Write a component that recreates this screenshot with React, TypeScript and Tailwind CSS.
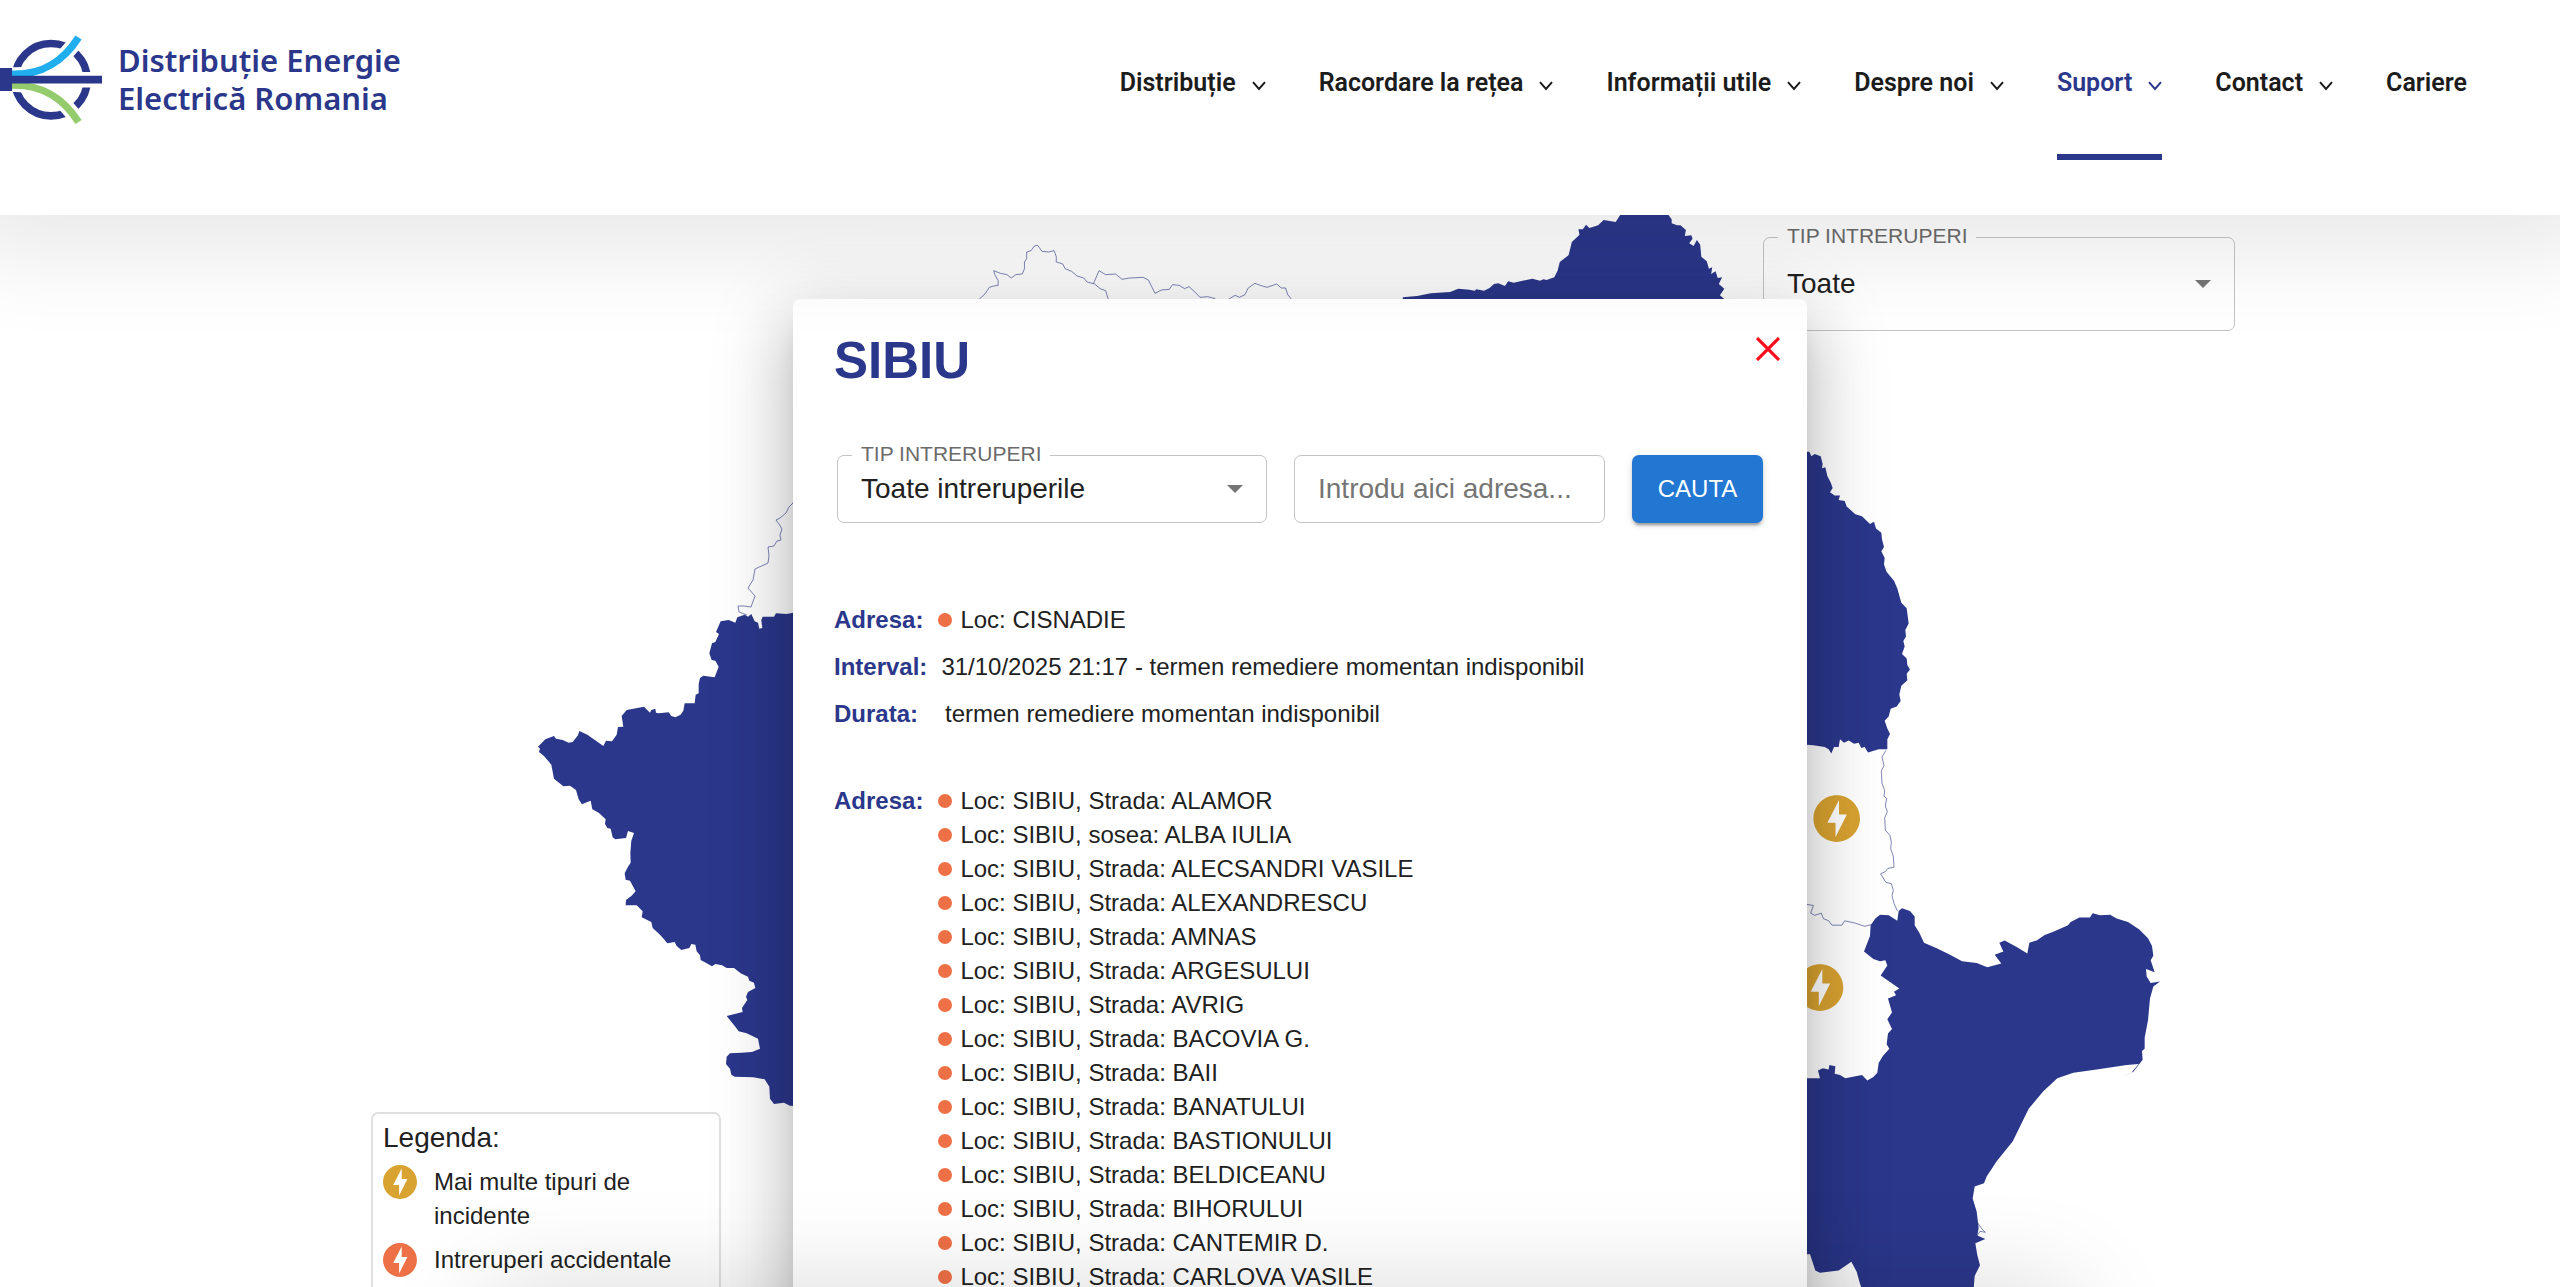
import React, { useState } from 'react';
import clsx from 'clsx';

const NAV_ITEMS = [
  { label: 'Distribuție', hasMenu: true },
  { label: 'Racordare la rețea', hasMenu: true },
  { label: 'Informații utile', hasMenu: true },
  { label: 'Despre noi', hasMenu: true },
  { label: 'Suport', hasMenu: true, active: true },
  { label: 'Contact', hasMenu: true },
  { label: 'Cariere', hasMenu: false },
];

const STREETS = [
  'Strada: ALAMOR',
  'sosea: ALBA IULIA',
  'Strada: ALECSANDRI VASILE',
  'Strada: ALEXANDRESCU',
  'Strada: AMNAS',
  'Strada: ARGESULUI',
  'Strada: AVRIG',
  'Strada: BACOVIA G.',
  'Strada: BAII',
  'Strada: BANATULUI',
  'Strada: BASTIONULUI',
  'Strada: BELDICEANU',
  'Strada: BIHORULUI',
  'Strada: CANTEMIR D.',
  'Strada: CARLOVA VASILE',
];

const BOLT =
  'M12 2.02c-5.51 0-9.98 4.47-9.98 9.98s4.47 9.98 9.98 9.98 9.98-4.47 9.98-9.98S17.51 2.02 12 2.02zM11.48 20v-6.26H8L13 4v6.26h3.35L11.48 20z';

const Logo: React.FC = () => (
  <a href="#" className="flex items-center">
    <svg viewBox="0 30 110 100" className="h-[100px] w-[110px]" aria-hidden="true">
      <circle cx="51" cy="79.7" r="36.2" fill="none" stroke="#2b378b" strokeWidth="7.6" />
      <path d="M12 74.8C44 76 64 60 78.5 37.5" fill="none" stroke="#fff" strokeWidth="15" />
      <path d="M12 84.6C44 83.4 64 99.4 78.5 121.9" fill="none" stroke="#fff" strokeWidth="15" />
      <path d="M12 72h92v15.4H12z" fill="#fff" />
      <path d="M12 74.3C44 75 64 60 78.5 37.5" fill="none" stroke="#20aeee" strokeWidth="7.4" />
      <path d="M12 85.1C44 84.4 64 99.4 78.5 121.9" fill="none" stroke="#93cb6d" strokeWidth="7.4" />
      <path d="M0 68h12v7.7h90v7.7H12V91H0z" fill="#2b378b" />
    </svg>
    <span className="pb-[3px] pl-[8px] font-['Noto_Sans',sans-serif] text-[31px] leading-[38px] font-semibold text-[#2b378b]">
      Distribuție Energie
      <br />
      Electrică Romania
    </span>
  </a>
);

const Header: React.FC = () => (
  <header className="relative z-20 flex h-[215px] shrink-0 items-start justify-between bg-white pr-[93px] shadow-[0_2px_84px_40px_rgba(0,0,0,0.088)]">
    <div className="pt-[30px]">
      <Logo />
    </div>
    <nav className="flex gap-[53px]">
      {NAV_ITEMS.map((item) => (
        <a
          key={item.label}
          href="#"
          className={clsx(
            "flex h-[160px] items-center gap-[16px] border-b-6 pt-[11px] font-['Roboto',sans-serif] text-[25px] font-semibold",
            item.active ? 'border-[#2b378b] text-[#2b378b]' : 'border-transparent text-[#1c1c1c]',
          )}
        >
          {item.label}
          {item.hasMenu && (
            <svg viewBox="0 0 14 10" className="mt-[6px] h-[10px] w-[14px]" fill="none" stroke="currentColor" strokeWidth="2">
              <path d="M1 1.2 7 8l6-6.8" />
            </svg>
          )}
        </a>
      ))}
    </nav>
  </header>
);

interface OutlinedSelectProps {
  id: string;
  value: string;
  className?: string;
  selectClassName: string;
}

const OutlinedSelect: React.FC<OutlinedSelectProps> = ({ id, value, className, selectClassName }) => (
  <fieldset className={clsx('rounded-[7px] border border-[#c4c4c4]', className)}>
    <legend className="ml-[14px] px-[9px] pb-[2px] text-[21px] leading-[18px] text-[#6b6b6b]">
      <label htmlFor={id}>TIP INTRERUPERI</label>
    </legend>
    <div className="relative">
      <select
        id={id}
        defaultValue={value}
        className={clsx('block w-full appearance-none bg-transparent pl-[23px] text-[28px] text-[#212121] outline-none', selectClassName)}
      >
        <option>{value}</option>
      </select>
      <svg viewBox="0 0 16 8" className="pointer-events-none absolute inset-y-0 right-[23px] my-auto h-[8px] w-[16px]" aria-hidden="true">
        <path d="M0 0h16L8 8z" fill="#757575" />
      </svg>
    </div>
  </fieldset>
);

const CountyMap: React.FC = () => (
  <svg viewBox="0 215 2560 1072" className="absolute inset-x-0 top-0 w-full" aria-hidden="true">
    {/* western counties */}
    <g transform="translate(520 600) scale(.33333)" fill="#2b378b">
      <path d="M900 40 820 38 800 42 768 40 762 50 728 50 724 60 727 84 718 86 714 68 704 64 694 42 684 50 674 44 652 52 646 68 626 60 602 64 588 96 597 102 586 126 576 130 568 160 575 180 586 182 596 200 584 232 550 227 540 234 536 252 536 280 527 284 524 310 494 310 490 332 482 344 466 352 454 348 446 337 416 340 408 338 406 326 394 330 390 338 372 320 320 330 305 348 310 380 294 381 290 404 276 424 258 422 250 438 202 404 178 393 174 406 158 426 146 428 128 420 108 416 102 408 76 418 54 440 60 446 57 456 72 468 94 494 102 536 130 559 150 557 168 570 176 598 186 613 202 606 212 602 217 628 236 638 257 658 255 672 262 684 272 686 278 712 286 718 318 714 324 693 342 699 334 722 331 760 332 788 324 800 314 820 317 839 330 842 347 874 334 888 318 900 317 916 350 916 368 934 365 952 394 966 398 984 420 1004 432 1018 442 1030 464 1026 470 1038 484 1050 508 1044 514 1032 526 1034 530 1054 540 1066 542 1080 560 1090 576 1099 586 1092 606 1096 620 1104 642 1104 662 1120 684 1130 688 1142 702 1148 706 1164 684 1176 678 1190 682 1200 666 1224 668 1236 620 1248 646 1280 656 1294 680 1300 714 1316 720 1346 696 1356 664 1358 630 1360 620 1370 618 1392 630 1406 634 1424 644 1430 700 1432 734 1438 748 1460 750 1496 762 1512 792 1508 810 1517 900 1520Z" />
    </g>
    <path
      d="M747 615 739 612 738 606 744 606 751 607 755 596 748 588 753 580 755 569 768 563 769 556 768 547 774 546 777 541 781 540 780 535 782 529 779 524 776 520 780 518 786 513 789 507 793 503 800 490"
      fill="none"
      stroke="#2b378b"
      strokeOpacity=".6"
    />
    {/* northern border */}
    <g transform="translate(940 200) scale(.54847 .33333)">
      <path
        d="M842 310 844 292 870 288 895 280 930 276 945 266 965 269 975 272 978 268 992 272 1002 264 1010 252 1018 250 1030 258 1036 244 1046 248 1080 236 1094 242 1100 238 1106 240 1120 232 1126 212 1130 186 1146 166 1152 126 1166 104 1164 88 1172 88 1178 74 1184 84 1200 76 1210 60 1232 66 1242 40 1326 40 1334 58 1334 70 1344 76 1350 76 1360 90 1358 108 1370 106 1372 116 1366 130 1374 138 1380 120 1386 134 1388 170 1398 184 1402 206 1408 202 1406 222 1414 214 1418 234 1426 232 1420 252 1430 266 1422 286 1432 300V312Z"
        fill="#2b378b"
      />
      <g fill="none" stroke="#2b378b" strokeOpacity=".6" strokeWidth="1">
        <path vectorEffect="non-scaling-stroke" d="m70 300 12-18 8-20 8-4 8-2 0-14-6-18-2-12 12 8 12 4 8 10 8-10 12-2 4-16 0-20 4-10 0-20 8-4 6-14 6-2 8 18 12 2 10-4 4 18 0 16 12 6 4 14 12 8 10 14 12 6 6 12 14 6 10 14 10 6 6 32" />
        <path vectorEffect="non-scaling-stroke" d="m280 250 10-38 12 12 18-2 12 16 14-4 24-2 10 8 6 20 6 20 12-10 14-2 6-14 12 2 10 10 8-6 12 18 8 14 14-2 14 6" />
        <path vectorEffect="non-scaling-stroke" d="m526 298 12-12 8 6 10-8 6-20 12-14 10 6 12 6 18-10 8 12 8 0 4 20 8 16" />
      </g>
    </g>
    {/* eastern counties and the coast */}
    <g transform="translate(1780 430) scale(.33333 .54655)">
      <path
        d="M60 40 88 40 94 48 104 44 122 48 128 62 126 70 136 68 142 84 152 96 158 106 150 114 164 120 180 120 176 128 194 130 200 140 226 154 246 158 270 172 282 168 288 180 304 188 306 200 312 214 304 222 314 234 312 246 320 260 342 276 352 290 364 316 380 326 386 354 376 366 378 378 370 386 374 396 366 410 380 418 382 430 390 438 380 446 382 458 364 468 358 484 362 496 350 506 332 510 326 524 314 532 322 546 330 556 322 566 322 584 296 584 264 590 254 580 244 582 236 572 222 574 206 568 192 572 180 566 176 580 162 580 154 592 146 584 134 580 100 577 60 575Z"
        fill="#2b378b"
      />
      <path
        d="M60 1186 120 1186 114 1172 128 1168 146 1170 148 1162 166 1164 164 1178 180 1180 196 1186 246 1180 262 1190 280 1184 292 1176 296 1158 308 1146 328 1132 320 1124 324 1104 336 1096 322 1078 336 1066 324 1040 348 1034 342 1028 358 1022 302 998 322 980 316 970 300 972 280 968 252 954 270 926 272 906 286 894 300 887 326 888 352 898 356 880 366 875 390 880 404 890 404 906 418 920 432 938 470 948 510 960 546 972 590 975 622 983 664 976 644 960 670 954 658 938 674 934 710 946 742 958 748 938 770 934 794 924 820 918 864 906 872 900 898 892 930 892 938 884 960 888 990 887 1010 894 1044 900 1078 914 1104 930 1116 944 1120 962 1112 970 1124 992 1098 986 1100 1000 1112 1012 1140 1009 1120 1018 1110 1040 1104 1080 1094 1112 1094 1132 1086 1136 1088 1152 1060 1174 1024 1184 1054 1176 1076 1160 1040 1162 950 1170 880 1176 832 1186 790 1210 746 1242 698 1302 650 1338 620 1366 612 1378 584 1384 578 1406 590 1430 596 1460 592 1474 616 1480 586 1488 592 1510 600 1528 584 1548 580 1580 250 1580 240 1562 230 1540 214 1522 176 1538 120 1542 106 1538 90 1508 60 1508Z"
        fill="#2b378b"
      />
      <g fill="none" stroke="#2b378b" strokeOpacity=".6" strokeWidth="1">
        <path vectorEffect="non-scaling-stroke" d="m318 586-12 12 6 16-8 10 2 22 8 14-2 10 8 4-4 14 6 10-8 12 2 22 14 10 4 12-2 12 8 14 2 20-18 2-8 6-14 4 16 16 16 2 6 12-4 10 6 14 10 14" />
        <path vectorEffect="non-scaling-stroke" d="m80 868 20 2-8 14 12 4 20-4 6 10 16 4 10 8h30l8-8 30 4 30 6 26-4" />
        <path vectorEffect="non-scaling-stroke" d="m592 1450 14 12 10 6-16-2-10 10" />
      </g>
    </g>
    {/* outage pins */}
    <g fill="#d9a331">
      <path transform="translate(1808.7 790.6) scale(2.333)" d={BOLT} />
      <path transform="translate(1792 959.6) scale(2.333)" d={BOLT} />
    </g>
  </svg>
);

const LegendRow: React.FC<{ color: string; children: React.ReactNode }> = ({ color, children }) => (
  <li className="flex items-start gap-[17px]">
    <svg viewBox="2 2 20 20" className="h-[34px] w-[34px] shrink-0" aria-hidden="true">
      <path d={BOLT} fill={color} />
    </svg>
    <span>{children}</span>
  </li>
);

const Legend: React.FC = () => (
  <section className="absolute top-[897px] left-[371px] w-[350px] rounded-[7px] border-2 border-[#e0e0e0] bg-white px-[10px] pt-[4px] pb-[20px] text-[#212121]">
    <h2 className="text-[28px] leading-[40px]">Legenda:</h2>
    <ul className="mt-[7px] flex flex-col gap-[10px] text-[24px] leading-[34px]">
      <LegendRow color="#d9a331">Mai multe tipuri de incidente</LegendRow>
      <LegendRow color="#ee7046">Intreruperi accidentale</LegendRow>
    </ul>
  </section>
);

const Place: React.FC<{ children: React.ReactNode }> = ({ children }) => (
  <li className="flex items-center gap-[8px]">
    <span className="h-[14px] w-[14px] rounded-full bg-[#ee7046]" />
    {children}
  </li>
);

const Term: React.FC<{ children: React.ReactNode }> = ({ children }) => (
  <dt className="font-bold text-[#2b378b]">{children}</dt>
);

const CountyDialog: React.FC = () => {
  const [address, setAddress] = useState('');

  return (
    <div
      role="dialog"
      aria-labelledby="county-title"
      className="relative z-10 w-full max-w-[1014px] rounded-t-[7px] bg-white px-[41px] pt-[30px] pb-[40px] shadow-[0_19px_25px_-12px_rgba(0,0,0,0.2),0_41px_64px_5px_rgba(0,0,0,0.14),0_15px_78px_14px_rgba(0,0,0,0.12)]"
    >
      <div className="flex items-start justify-between">
        <h1 id="county-title" className="text-[51px] leading-[64px] font-bold text-[#2b378b]">
          SIBIU
        </h1>
        <button type="button" aria-label="Inchide" className="-mr-[22px] p-[8px]">
          <svg viewBox="0 0 24 24" className="h-[24px] w-[24px]" fill="none" stroke="#fc0d1b" strokeWidth="3.2">
            <path d="M1 1l22 22M23 1 1 23" />
          </svg>
        </button>
      </div>

      <form className="mt-[52px] ml-[3px] flex items-end gap-[27px]" onSubmit={(e) => e.preventDefault()}>
        <OutlinedSelect id="outage-kind" value="Toate intreruperile" className="w-[430px] pb-[9px]" selectClassName="h-[48px]" />
        <input
          type="text"
          aria-label="Adresa"
          value={address}
          onChange={(e) => setAddress(e.target.value)}
          placeholder="Introdu aici adresa..."
          className="h-[68px] w-[311px] rounded-[7px] border border-[#c4c4c4] px-[23px] text-[28px] text-[#212121] outline-none placeholder:text-[#757575]"
        />
        <button
          type="submit"
          className="h-[68px] w-[131px] rounded-[7px] bg-[#2277d2] text-[24px] text-white shadow-[0_5px_2px_-3px_rgba(0,0,0,0.2),0_3px_3px_0_rgba(0,0,0,0.14),0_2px_8px_0_rgba(0,0,0,0.12)]"
        >
          CAUTA
        </button>
      </form>

      <dl className="mt-[80px] flex flex-col gap-[13px] text-[24px] leading-[34px] text-[#212121]">
        <div className="flex">
          <Term>Adresa:</Term>
          <dd className="pl-[15px]">
            <ul>
              <Place>Loc: CISNADIE</Place>
            </ul>
          </dd>
        </div>
        <div className="flex">
          <Term>Interval:</Term>
          <dd className="pl-[14px]">31/10/2025 21:17 - termen remediere momentan indisponibil</dd>
        </div>
        <div className="flex">
          <Term>Durata:</Term>
          <dd className="pl-[27px]">termen remediere momentan indisponibil</dd>
        </div>
      </dl>

      <dl className="mt-[53px] flex text-[24px] leading-[34px] text-[#212121]">
        <Term>Adresa:</Term>
        <dd className="pl-[15px]">
          <ul>
            {STREETS.map((street) => (
              <Place key={street}>Loc: SIBIU, {street}</Place>
            ))}
          </ul>
        </dd>
      </dl>
    </div>
  );
};

export default function App() {
  return (
    <div className="relative flex h-screen flex-col overflow-hidden bg-white font-['Liberation_Sans',Arial,sans-serif]">
      <Header />
      <main className="relative flex flex-1 items-start justify-center pt-[84px] pl-[40px]">
        <CountyMap />
        <OutlinedSelect id="map-kind" value="Toate" className="absolute top-[12px] right-[325px] w-[472px] pb-[9px]" selectClassName="h-[74px]" />
        <Legend />
        <CountyDialog />
      </main>
      {/* shade cast by the bar under the fold */}
      <div className="pointer-events-none absolute inset-x-[19%] top-full z-20 h-[100px] shadow-[0_0_100px_rgba(0,0,0,0.15)]" />
    </div>
  );
}
